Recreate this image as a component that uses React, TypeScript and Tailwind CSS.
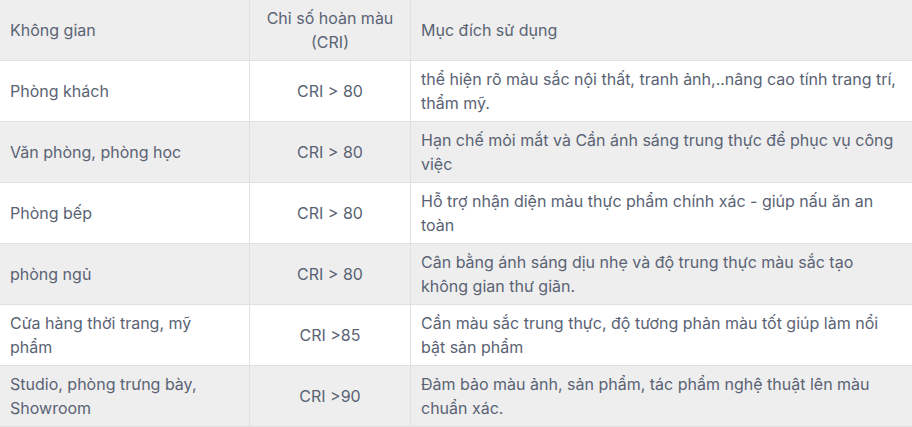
import React from "react";

const rows: [string, string, string][] = [
  ["Phòng khách", "CRI > 80", "thể hiện rõ màu sắc nội thất, tranh ảnh,..nâng cao tính trang trí, thẩm mỹ."],
  ["Văn phòng, phòng học", "CRI > 80", "Hạn chế mỏi mắt và Cần ánh sáng trung thực để phục vụ công việc"],
  ["Phòng bếp", "CRI > 80", "Hỗ trợ nhận diện màu thực phẩm chính xác - giúp nấu ăn an toàn"],
  ["phòng ngủ", "CRI > 80", "Cân bằng ánh sáng dịu nhẹ và độ trung thực màu sắc tạo không gian thư giãn."],
  ["Cửa hàng thời trang, mỹ phẩm", "CRI >85", "Cần màu sắc trung thực, độ tương phản màu tốt giúp làm nổi bật sản phẩm"],
  ["Studio, phòng trưng bày, Showroom", "CRI >90", "Đảm bảo màu ảnh, sản phẩm, tác phẩm nghệ thuật lên màu chuẩn xác."],
];

export default function App() {
  return (
    <div className="w-[912px] bg-white" style={{ fontFamily: "Inter, 'Noto Sans', sans-serif" }}>
      <table className="w-full border-separate border-spacing-0 table-fixed text-[16px] leading-6 text-[#5a6374]">
        <colgroup>
          <col className="w-[250px]" />
          <col className="w-[161px]" />
          <col />
        </colgroup>
        <thead>
          <tr className="h-[61px] bg-[#eeeeee]">
            <th className="border-b border-r border-[#e0e0e0] pl-[10px] pr-[20px] py-[6px] text-left font-normal">Không gian</th>
            <th className="border-b border-r border-[#e0e0e0] px-[10px] py-[6px] text-center font-normal">Chỉ số hoàn màu (CRI)</th>
            <th className="border-b border-[#e0e0e0] px-[10px] py-[6px] text-left font-normal">Mục đích sử dụng</th>
          </tr>
        </thead>
        <tbody>
          {rows.map((r, i) => (
            <tr key={i} className={`h-[61px] ${i % 2 === 0 ? "bg-white" : "bg-[#eeeeee]"}`}>
              <td className="border-b border-r border-[#e0e0e0] pl-[10px] pr-[20px] py-[6px] text-left align-middle">{r[0]}</td>
              <td className="border-b border-r border-[#e0e0e0] px-[10px] py-[6px] text-center align-middle">{r[1]}</td>
              <td className="border-b border-[#e0e0e0] px-[10px] py-[6px] text-left align-middle">{r[2]}</td>
            </tr>
          ))}
        </tbody>
      </table>
    </div>
  );
}
